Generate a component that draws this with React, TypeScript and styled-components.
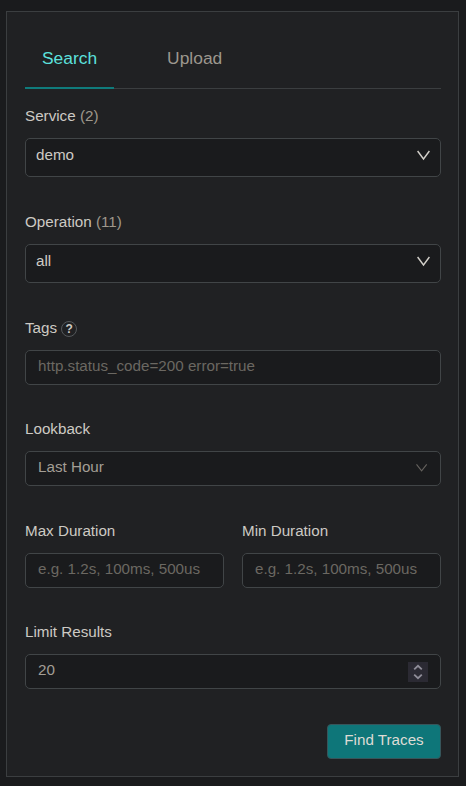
import React from "react";
import styled, { createGlobalStyle } from "styled-components";

const GlobalStyle = createGlobalStyle`
  * { box-sizing: border-box; }
  body {
    margin: 0;
    background: #1a1b1d;
    font-family: "Nimbus Sans", "Liberation Sans", Arial, Helvetica, sans-serif;
    font-size: 15.2px;
    color: #cdcac4;
  }
`;

const Page = styled.main`
  height: 786px;
  padding: 11px 7px 9px 6px;
`;

const Panel = styled.section`
  height: 766px;
  padding: 18px 17px 0 18px;
  border: 1px solid #3b3e40;
  background: #202123;
`;

const Tabs = styled.nav`
  display: flex;
  gap: 36px;
  height: 59px;
  border-bottom: 1px solid #3b3e40;
`;

const Tab = styled.button<{ $active?: boolean }>`
  height: 59px;
  padding: 0 17px 1px;
  border: 0;
  border-bottom: 2px solid ${(p) => (p.$active ? "#0f7b7b" : "transparent")};
  background: none;
  font: inherit;
  font-size: 17.4px;
  color: ${(p) => (p.$active ? "#5ce0dc" : "#9c978e")};
`;

const Form = styled.form`
  padding-top: 16px;
`;

const Field = styled.div<{ $gap?: number }>`
  flex: 1;
  min-width: 0;
  margin-bottom: ${(p) => p.$gap ?? 34}px;
`;

const Label = styled.label`
  display: flex;
  align-items: center;
  height: 33px;
  padding-bottom: 13px;
  white-space: pre;
`;

const Count = styled.span`
  color: #9f988c;
`;

const Help = styled.span`
  display: grid;
  place-items: center;
  width: 16px;
  height: 16px;
  margin: 4px 0 0 4px;
  border: 1px solid #54585b;
  border-radius: 50%;
  font-size: 12px;
  line-height: 14px;
  font-weight: 700;
`;

const Select = styled.div<{ $compact?: boolean }>`
  display: flex;
  align-items: center;
  justify-content: space-between;
  height: ${(p) => (p.$compact ? 35 : 39)}px;
  padding: ${(p) => (p.$compact ? "0 12px 5px" : "0 10px 7px")};
  border: 1px solid #414547;
  border-radius: 5px;
  background: #1a1b1d;
  color: ${(p) => (p.$compact ? "#a39e95" : "#cdcac4")};
`;

const InputBox = styled.div`
  display: flex;
  align-items: center;
  height: 35px;
  padding: 0 12px 5px;
  border: 1px solid #414547;
  border-radius: 5px;
  background: #1a1b1d;
`;

const Input = styled.input`
  flex: 1;
  min-width: 0;
  padding: 0;
  border: 0;
  outline: 0;
  background: none;
  font: inherit;
  color: #a39e95;
  &::placeholder { color: #6b6862; opacity: 1; }
`;

const Stepper = styled.span`
  display: grid;
  place-items: center;
  width: 20px;
  height: 20px;
  margin-top: 5px;
  background: #2b2a33;
`;

const Row = styled.div`
  display: flex;
  gap: 18px;
`;

const Actions = styled.div`
  display: flex;
  justify-content: flex-end;
  padding-top: 35px;
`;

const Submit = styled.button`
  width: 114px;
  height: 35px;
  padding: 0 0 5px;
  border: 1px solid #37555a;
  border-radius: 4px;
  background: #0e7679;
  font: inherit;
  color: #dedbd5;
`;

const Arrow = styled.svg<{ $small?: boolean }>`
  width: ${(p) => (p.$small ? 12 : 14)}px;
  height: 12px;
  margin-top: ${(p) => (p.$small ? 4 : 3)}px;
  fill: none;
  stroke: ${(p) => (p.$small ? "#65625e" : "#d3d0ca")};
  stroke-width: ${(p) => (p.$small ? 1.1 : 1.4)};
`;

const Chevron = ({ small }: { small?: boolean }) => (
  <Arrow $small={small} viewBox={small ? "0 0 12 12" : "0 0 14 12"}>
    <path d={small ? "M0.5 2.3 L5.6 8.8 L10.7 2.3" : "M1.6 1 L7.5 9 L13.4 1"} />
  </Arrow>
);

export default function App() {
  return (
    <Page>
      <GlobalStyle />
      <Panel>
        <Tabs>
          <Tab $active>Search</Tab>
          <Tab>Upload</Tab>
        </Tabs>
        <Form>
          <Field>
            <Label>Service <Count>(2)</Count></Label>
            <Select>demo<Chevron /></Select>
          </Field>
          <Field>
            <Label>Operation <Count>(11)</Count></Label>
            <Select>all<Chevron /></Select>
          </Field>
          <Field $gap={33}>
            <Label>Tags<Help>?</Help></Label>
            <InputBox><Input placeholder="http.status_code=200 error=true" /></InputBox>
          </Field>
          <Field>
            <Label>Lookback</Label>
            <Select $compact>Last Hour<Chevron small /></Select>
          </Field>
          <Row>
            <Field $gap={33}>
              <Label>Max Duration</Label>
              <InputBox><Input placeholder="e.g. 1.2s, 100ms, 500us" /></InputBox>
            </Field>
            <Field $gap={33}>
              <Label>Min Duration</Label>
              <InputBox><Input placeholder="e.g. 1.2s, 100ms, 500us" /></InputBox>
            </Field>
          </Row>
          <Field $gap={0}>
            <Label>Limit Results</Label>
            <InputBox>
              <Input defaultValue="20" />
              <Stepper>
                <svg width="10" height="16" viewBox="0 0 10 16" fill="none" stroke="#8f8d98" strokeWidth="1.8">
                  <path d="M1.2 5.4 L5 1.8 L8.8 5.4 M1.2 10.6 L5 14.2 L8.8 10.6" />
                </svg>
              </Stepper>
            </InputBox>
          </Field>
          <Actions>
            <Submit type="button">Find Traces</Submit>
          </Actions>
        </Form>
      </Panel>
    </Page>
  );
}
